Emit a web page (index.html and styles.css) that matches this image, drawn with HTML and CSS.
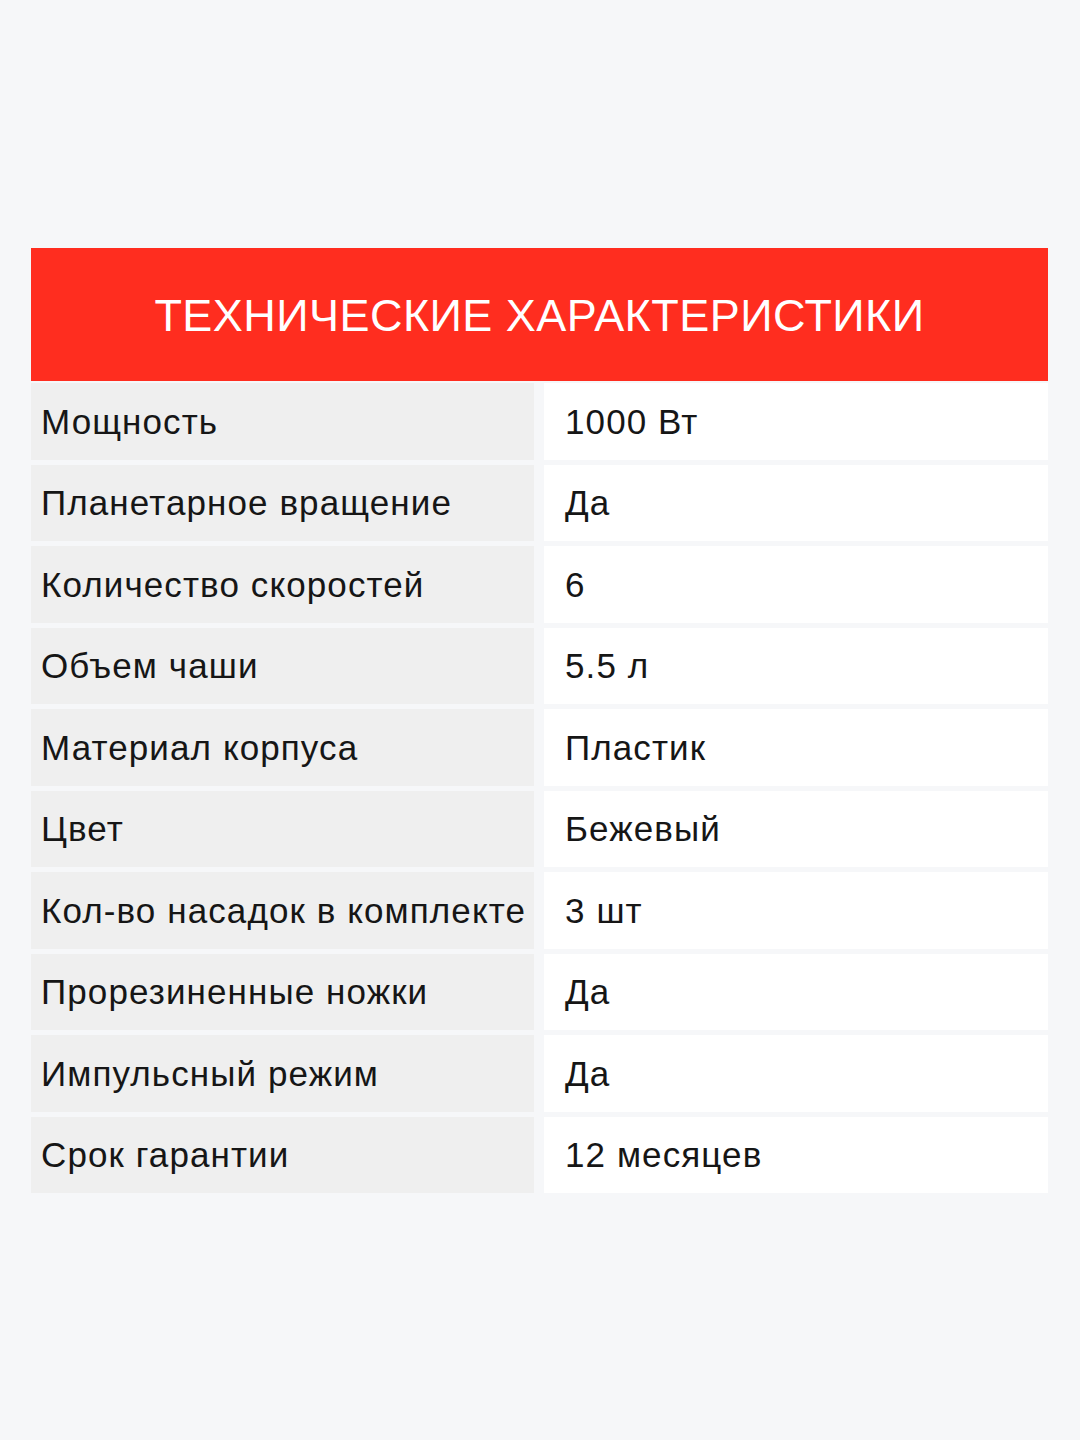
FILE: index.html
```html
<!DOCTYPE html>
<html lang="ru">
<head>
<meta charset="utf-8">
<title>Технические характеристики</title>
<link rel="stylesheet" href="styles.css">
</head>
<body>
<main class="sheet">
  <header class="title-bar"><h1 class="title">ТЕХНИЧЕСКИЕ ХАРАКТЕРИСТИКИ</h1></header>
  <div class="specs">
    <div class="key">Мощность</div><div class="val">1000 Вт</div>
    <div class="key">Планетарное вращение</div><div class="val">Да</div>
    <div class="key">Количество скоростей</div><div class="val">6</div>
    <div class="key">Объем чаши</div><div class="val">5.5 л</div>
    <div class="key">Материал корпуса</div><div class="val">Пластик</div>
    <div class="key">Цвет</div><div class="val">Бежевый</div>
    <div class="key">Кол-во насадок в комплекте</div><div class="val">3 шт</div>
    <div class="key">Прорезиненные ножки</div><div class="val">Да</div>
    <div class="key">Импульсный режим</div><div class="val">Да</div>
    <div class="key">Срок гарантии</div><div class="val">12 месяцев</div>
  </div>
</main>
</body>
</html>
```
FILE: styles.css
```css
html, body {
  margin: 0;
  padding: 0;
  background: #f6f7f9;
}
body {
  width: 1080px;
  height: 1440px;
  font-family: "Liberation Sans", Arial, sans-serif;
  color: #161616;
}
.sheet {
  padding: 248px 32px 0 31px;
}
.title-bar {
  background: #ff2d1f;
  height: 133px;
  display: flex;
  align-items: center;
  justify-content: center;
}
.title {
  margin: 0;
  font-weight: 400;
  font-size: 45px;
  color: #ffffff;
  letter-spacing: 0.45px;
  padding-top: 2px;
}
.specs {
  margin-top: 2px;
  display: grid;
  grid-template-columns: 503px 504px;
  column-gap: 10px;
  row-gap: 5px;
  grid-auto-rows: 76.5px;
}
.key, .val {
  display: flex;
  align-items: center;
  font-size: 35px;
  letter-spacing: 1.1px;
  padding-top: 1px;
  box-sizing: border-box;
  white-space: nowrap;
}
.key {
  background: #efefef;
  padding-left: 10px;
}
.val {
  background: #ffffff;
  padding-left: 21px;
}
```
